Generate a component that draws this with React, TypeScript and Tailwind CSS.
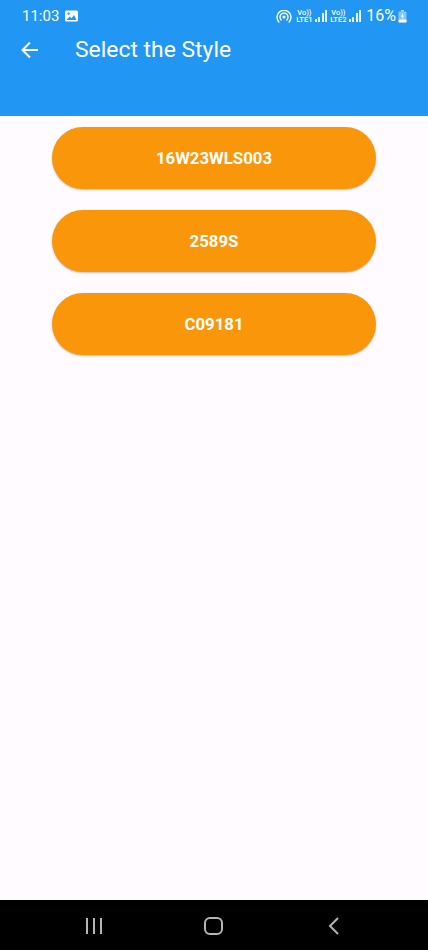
const font = { fontFamily: "Roboto, sans-serif" };

function PictureIcon() {
  return (
    <svg viewBox="0 0 13 12" className="ml-[6px] h-[12px] w-[13px]">
      <rect x="0" y="0.5" width="13" height="11" rx="1.5" fill="#fff" />
      <circle cx="3.6" cy="3.6" r="1.2" fill="#2196f3" />
      <path d="M1.5 10 L4.8 6.5 L6.6 8.2 L9 5 L11.6 10 Z" fill="#2196f3" />
    </svg>
  );
}

function Hotspot() {
  return (
    <svg viewBox="0 0 16 13" className="h-[13px] w-[16px]" fill="none" stroke="#fff" strokeWidth="1.4" strokeLinecap="round">
      <circle cx="8" cy="7" r="1.6" fill="#fff" stroke="none" />
      <path d="M5.2 10 A4 4 0 1 1 10.8 10" />
      <path d="M2.8 12 A7 7 0 1 1 13.2 12" />
    </svg>
  );
}

function Signal() {
  const bars = [3, 5, 9, 12];
  return (
    <div className="flex h-[12px] items-end gap-[1.5px] opacity-90">
      {bars.map((h, i) => (
        <div key={i} className="w-[2px] bg-white" style={{ height: h }} />
      ))}
    </div>
  );
}

function SimLabel({ n }: { n: number }) {
  return (
    <div className="flex w-[16px] flex-col items-center text-[7.5px] leading-[7.5px] font-medium text-white">
      <span>Vo))</span>
      <span>LTE{n}</span>
    </div>
  );
}

function Battery() {
  return (
    <svg viewBox="0 0 9 13" className="ml-[2px] h-[13px] w-[9px]">
      <rect x="3" y="0" width="3" height="1.5" fill="#fff" opacity="0.7" />
      <rect x="0.5" y="1.5" width="8" height="11" rx="1" fill="#fff" opacity="0.45" />
      <rect x="0.5" y="9.5" width="8" height="3" rx="0.8" fill="#fff" />
      <path d="M5 2.5 L2.8 6.8 H4.4 L3.8 9.5 L6.4 5.6 H4.8 Z" fill="#fff" />
    </svg>
  );
}

function StyleButton({ label }: { label: string }) {
  return (
    <button className="flex h-[62px] w-[324px] items-center justify-center rounded-full bg-[#fa960a] pt-[1px] text-[16.8px] font-bold text-white shadow-[0_1px_2px_rgba(0,0,0,0.25)]">
      {label}
    </button>
  );
}

export default function App() {
  const styles = ["16W23WLS003", "2589S", "C09181"];
  return (
    <div className="flex h-[950px] w-[428px] flex-col overflow-hidden bg-[#fffbfe]" style={font}>
      <header className="h-[116px] shrink-0 bg-[#2196f3] text-white">
        <div className="flex h-[31px] items-center pt-[1px] pr-[21px] pl-[22px]">
          <span className="text-[15px] leading-none">11:03</span>
          <PictureIcon />
          <div className="ml-auto flex items-center">
            <Hotspot />
            <div className="ml-[4px] flex items-center gap-[2.5px]">
              <SimLabel n={1} />
              <Signal />
            </div>
            <div className="ml-[3px] flex items-center gap-[2.5px]">
              <SimLabel n={2} />
              <Signal />
            </div>
            <span className="ml-[5px] text-[16px] leading-none">16%</span>
            <Battery />
          </div>
        </div>
        <div className="flex h-[37px] items-center pl-[20px]">
          <svg viewBox="0 0 20 20" className="h-[20px] w-[20px]" fill="none" stroke="#fff" strokeWidth="2">
            <path d="M18 10 H2.5" />
            <path d="M10 2.5 L2.5 10 L10 17.5" />
          </svg>
          <h1 className="ml-[35px] pt-[1px] text-[22.9px] font-normal">Select the Style</h1>
        </div>
      </header>

      <main className="flex flex-1 flex-col items-center gap-[21px] pt-[11px]">
        {styles.map((s) => (
          <StyleButton key={s} label={s} />
        ))}
      </main>

      <nav className="flex h-[50px] shrink-0 items-center bg-black pt-[2px]">
        <div className="ml-[86px] flex gap-[5px]">
          <div className="h-[16px] w-[2px] bg-[#b5b5b5]" />
          <div className="h-[16px] w-[2px] bg-[#b5b5b5]" />
          <div className="h-[16px] w-[2px] bg-[#b5b5b5]" />
        </div>
        <div className="ml-[102px] h-[18px] w-[19px] rounded-[6px] border-2 border-[#b5b5b5]" />
        <svg viewBox="0 0 11 18" className="ml-[105px] h-[18px] w-[11px]" fill="none" stroke="#b5b5b5" strokeWidth="2">
          <path d="M10 1 L2 9 L10 17" />
        </svg>
      </nav>
    </div>
  );
}
